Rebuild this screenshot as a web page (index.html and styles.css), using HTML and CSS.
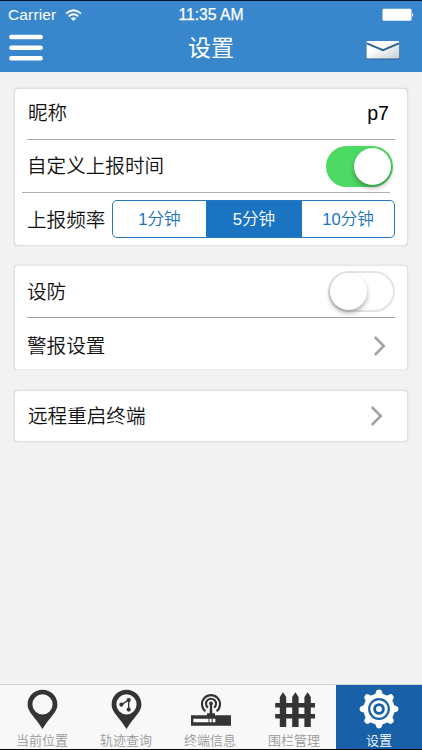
FILE: index.html
```html
<!DOCTYPE html>
<html lang="zh-CN">
<head>
<meta charset="utf-8">
<title>设置</title>
<link rel="stylesheet" href="styles.css">
</head>
<body>
<div class="screen">
  <header class="header">
    <div class="status">
      <div class="carrier"><span>Carrier</span>
        <svg class="wifi" width="17" height="13" viewBox="0 0 17 13"><g fill="none" stroke="#fff" stroke-width="1.8"><path d="M1 4.6Q8.5-2 16 4.6"/><path d="M3.7 7.4Q8.5 3.2 13.3 7.4"/></g><path d="M8.5 12 5.8 9.2Q8.5 7.1 11.2 9.2Z" fill="#fff"/></svg>
      </div>
      <div class="clock">11:35 AM</div>
      <svg class="battery" width="33" height="14" viewBox="0 0 33 14"><rect x="1.5" y=".8" width="29" height="12" rx="1.4" fill="#fff"/><path d="M31.2 4.8Q33.4 6.8 31.2 8.8Z" fill="#fff"/></svg>
    </div>
    <div class="navbar">
      <svg class="menu" width="34" height="28" viewBox="0 0 34 28"><path d="M2.3 3H31.7M2.3 13.7H31.7M2.3 24.3H31.7" stroke="#fff" stroke-width="4.4" stroke-linecap="round"/></svg>
      <h1>设置</h1>
      <svg class="mail" width="34" height="21" viewBox="0 0 34 21">
        <defs><linearGradient id="paper" x1="0" y1="0" x2="1" y2="1"><stop offset=".35" stop-color="#fff"/><stop offset="1" stop-color="#c9cdd1"/></linearGradient></defs>
        <rect x=".5" y="1.6" width="33" height="18" rx="1" fill="#285f91"/>
        <rect x=".6" y="1" width="32.6" height="17.6" rx="1" fill="url(#paper)"/>
        <path d="M.8 3.4 17 10.2 33 3.4" fill="none" stroke="#2b6391" stroke-width="1.9"/>
      </svg>
    </div>
  </header>

  <main class="content">
    <section class="card report">
      <div class="row name"><span>昵称</span><span class="value">p7</span></div>
      <div class="row custom"><span>自定义上报时间</span><span class="switch on"><i></i></span></div>
      <div class="row rate"><span>上报频率</span>
        <div class="segments"><span>1分钟</span><span class="active">5分钟</span><span>10分钟</span></div>
      </div>
    </section>
    <section class="card alarm">
      <div class="row guard"><span>设防</span><span class="switch"><i></i></span></div>
      <div class="row alerts"><span>警报设置</span><svg class="chevron" width="13" height="22" viewBox="0 0 13 22"><path d="M1.8 2 10.8 11 1.8 20" fill="none" stroke="#a3a3a3" stroke-width="2.5"/></svg></div>
    </section>
    <section class="card restart">
      <div class="row"><span>远程重启终端</span><svg class="chevron" width="13" height="22" viewBox="0 0 13 22"><path d="M1.8 2 10.8 11 1.8 20" fill="none" stroke="#a3a3a3" stroke-width="2.5"/></svg></div>
    </section>
  </main>

  <nav class="tabs">
    <div class="tab">
      <svg width="42" height="42" viewBox="0 0 42 42"><path fill="#343434" fill-rule="evenodd" d="M21.5 1.7C13.1 1.7 6.6 8.2 6.6 16.4 6.6 24.5 14.5 29 21.5 41 28.5 29 36.4 24.5 36.4 16.4 36.4 8.2 29.9 1.7 21.5 1.7ZM21.5 6.3A10.1 10.1 0 1 1 21.5 26.5 10.1 10.1 0 1 1 21.5 6.3Z"/></svg>
      <span>当前位置</span>
    </div>
    <div class="tab">
      <svg width="42" height="42" viewBox="0 0 42 42"><path fill="#343434" fill-rule="evenodd" d="M21.5 1.7C13.1 1.7 6.6 8.2 6.6 16.4 6.6 24.5 14.5 29 21.5 41 28.5 29 36.4 24.5 36.4 16.4 36.4 8.2 29.9 1.7 21.5 1.7ZM21.5 6.3A10.1 10.1 0 1 1 21.5 26.5 10.1 10.1 0 1 1 21.5 6.3Z"/><path d="M16.4 16.6 23.7 12V21.6" fill="none" stroke="#343434" stroke-width="1.3"/><g fill="#343434"><circle cx="16.4" cy="16.6" r="2.1"/><circle cx="23.7" cy="12" r="2.1"/><circle cx="23.7" cy="21.6" r="2.1"/></g></svg>
      <span>轨迹查询</span>
    </div>
    <div class="tab">
      <svg width="42" height="42" viewBox="0 0 42 42"><g fill="none" stroke="#343434" stroke-width="2.1"><path d="M16.4 23.2A9 9 0 1 1 27.6 23.2"/><path d="M18.9 19.6A5 5 0 1 1 25.1 19.6"/></g><circle cx="22" cy="15.4" r="2" fill="#343434"/><path fill="#343434" fill-rule="evenodd" d="M21 15.4H23L23.4 25.3H26V27.3H42V37.8H2V27.3H18V25.3H20.6ZM4.3 30.8V34.3H19.5V30.8ZM20.4 30.8V34.3H22.7V30.8ZM23.7 30.8V34.3H26.4V30.8Z"/></svg>
      <span>终端信息</span>
    </div>
    <div class="tab">
      <svg width="42" height="42" viewBox="0 0 42 42"><path fill="#343434" d="M2.2 15H42V19.4H2.2ZM2.2 26H42V30.4H2.2ZM6.8 9 10 4.3 13.2 9V39H6.8ZM19.2 9 22.4 4.3 25.6 9V39H19.2ZM31.4 9 34.6 4.3 37.8 9V39H31.4Z"/></svg>
      <span>围栏管理</span>
    </div>
    <div class="tab selected">
      <svg width="42" height="42" viewBox="0 0 42 42"><g fill="#fff"><circle cx="21" cy="21" r="15.6"/><g id="teeth"><path d="M14 8.2Q17.6 7 17.9 3.9Q18.2 1.5 21 1.5T24.1 3.9Q24.4 7 28 8.2V33.8Q24.4 35 24.1 38.1Q23.8 40.5 21 40.5T17.9 38.1Q17.6 35 14 33.8Z"/></g><use href="#teeth" transform="rotate(45 21 21)"/><use href="#teeth" transform="rotate(90 21 21)"/><use href="#teeth" transform="rotate(135 21 21)"/></g><circle cx="21" cy="21" r="9.8" fill="none" stroke="#1861a8" stroke-width="2.2"/><circle cx="21" cy="21" r="4.4" fill="none" stroke="#1861a8" stroke-width="2.9"/></svg>
      <span>设置</span>
    </div>
  </nav>
</div>
</body>
</html>
```
FILE: styles.css
```css
* { box-sizing: border-box; }
body { margin: 0; font-family: "Liberation Sans", "Noto Sans CJK SC", sans-serif; }
.screen { width: 422px; height: 750px; display: flex; flex-direction: column; background: #f2f2f2; border-top: 1px solid #07152b; border-bottom: 1px solid #050505; overflow: hidden; }
.header { flex: none; height: 71px; background: #3887cc; color: #fff; }
.status { height: 28px; padding: 0 8px; display: grid; grid-template-columns: 1fr auto 1fr; align-items: center; font-size: 15.5px; line-height: 28px; }
.carrier { display: flex; align-items: center; gap: 9px; letter-spacing: .15px; }
.clock { font-size: 15.7px; -webkit-text-stroke: .25px #fff; }
.battery { justify-self: end; margin-top: -1px; }
.navbar { height: 43px; padding: 0 22px 5px 9px; display: grid; grid-template-columns: 1fr auto 1fr; align-items: center; }
.navbar h1 { margin: 0 0 0 13px; font-size: 23px; line-height: 36px; font-weight: 400; }
.mail { justify-self: end; margin-top: 4px; }
.content { flex: 1; padding: 16px 14px; color: #111; font-weight: 350; }
.card { background: #fff; border: 1px solid #e0e0e0; border-radius: 4px; box-shadow: 0 0 1px #bbb; padding: 0 12px; }
.report { height: 158px; }
.alarm { height: 105px; margin-top: 19px; border-top-color: #e6e6e6; border-bottom-color: #eee; }
.restart { height: 52px; margin-top: 20px; padding-left: 13px; }
.row { height: 52px; display: flex; align-items: center; justify-content: space-between; font-size: 19.6px; line-height: 30px; }
.name { height: 51px; padding-bottom: 2px; border-bottom: 1px solid #aaa; }
.name > span:first-child { padding-left: 1px; }
.value { padding-right: 6px; color: #000; font-weight: 400; }
.custom { height: 53px; margin: 0 5px 0 -5px; padding-left: 5px; border-bottom: 1px solid #b3b0b3; }
.custom .switch { margin-right: -3px; }
.rate > span { padding-top: 1px; }
.guard { border-bottom: 1px solid #a5a5a5; }
.alerts { padding-top: 3px; }
.restart .row { height: 50px; }
.switch { width: 67px; height: 41px; border-radius: 21px; border: 2px solid #e3e3e3; display: flex; align-items: center; }
.switch i { width: 37px; height: 37px; border-radius: 50%; background: #fff; box-shadow: 0 3px 5px rgba(0,0,0,.32); }
.switch.on { background: #4cd964; border-color: #4cd964; justify-content: flex-end; }
.segments { flex: none; width: 283px; height: 38px; display: grid; grid-template-columns: 93px 96px 1fr; border: 1px solid #2876bd; border-radius: 5px; overflow: hidden; color: #1b74c1; font-size: 16.6px; line-height: 38px; text-align: center; }
.segments .active { background: #1b74c1; color: #fff; }
.chevron { margin-right: 9px; }
.restart .chevron { margin-right: 12px; }
.tabs { flex: none; height: 65px; display: grid; grid-template-columns: repeat(4, 84px) 86px; border-top: 1px solid #d3d3d3; background: #f8f8f8; color: #999; }
.tab { display: flex; flex-direction: column; align-items: center; padding-top: 3px; font-size: 13px; line-height: 20px; }
.tab svg { flex: none; }
.tab span { margin-top: 1px; font-weight: 350; }
.tab.selected { background: #1861a8; color: #fff; }
```
